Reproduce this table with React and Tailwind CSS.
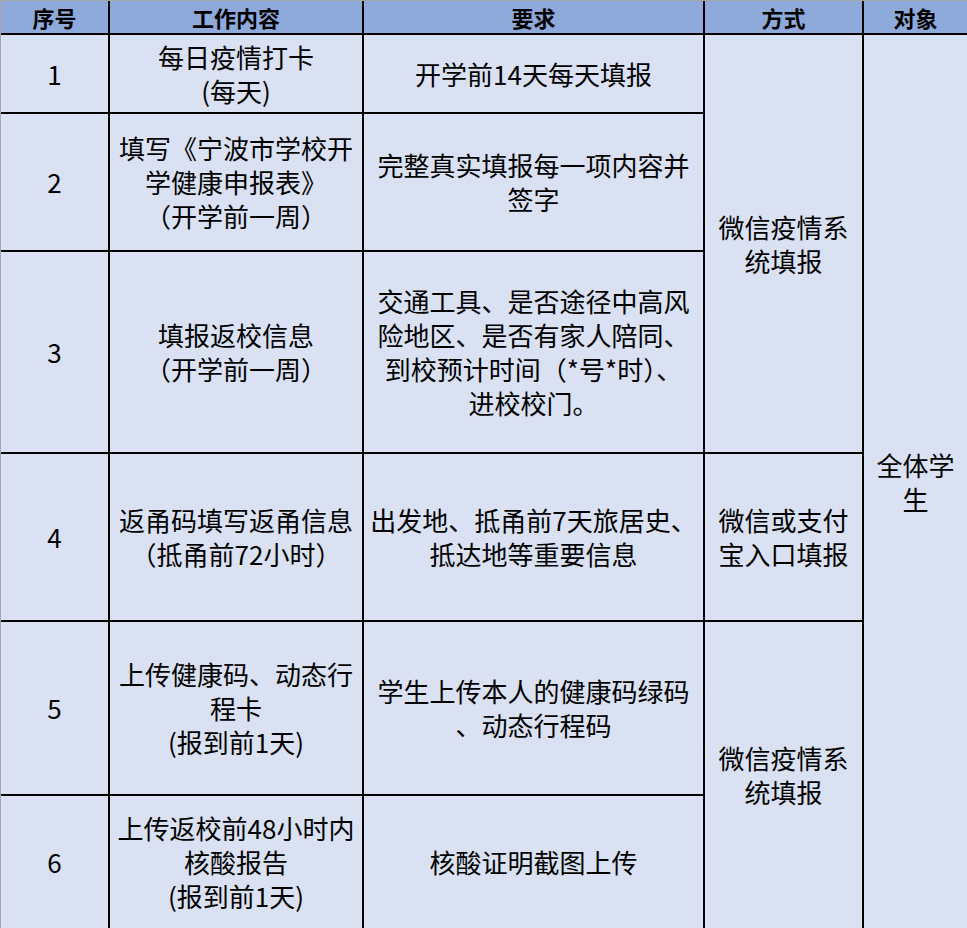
const Cell = ({ lines, className = "" }) => (
  <div
    className={
      "flex flex-col items-center justify-center bg-[#d9e1f2] text-center text-[26px] leading-[34px] text-black " +
      className
    }
  >
    {lines.map((l, i) => (
      <div key={i} className="whitespace-nowrap">
        {l}
      </div>
    ))}
  </div>
);

const Head = ({ children }) => (
  <div className="flex items-center justify-center bg-[#8eaadb] text-[22px] font-bold leading-none text-black">
    {children}
  </div>
);

const App = () => {
  return (
    <div
      className="h-[928px] w-[967px] overflow-hidden bg-white"
      style={{ fontFamily: '"Noto Sans CJK SC", "Noto Sans", sans-serif' }}
    >
      <div className="grid grid-cols-[107px_252px_339px_157px_103px] grid-rows-[32px_77px_136px_200px_166px_172px_132px] gap-[2px] border-l border-t border-[#a6a6a6] bg-black">
        <Head>序号</Head>
        <Head>工作内容</Head>
        <Head>要求</Head>
        <Head>方式</Head>
        <Head>对象</Head>

        {/* row 1 */}
        <Cell lines={["1"]} />
        <Cell lines={["每日疫情打卡", "(每天)"]} />
        <Cell lines={["开学前14天每天填报"]} />
        <Cell lines={["微信疫情系", "统填报"]} className="row-span-3" />
        <Cell lines={["全体学", "生"]} className="row-span-6" />

        {/* row 2 */}
        <Cell lines={["2"]} />
        <Cell lines={["填写《宁波市学校开", "学健康申报表》", "（开学前一周）"]} />
        <Cell lines={["完整真实填报每一项内容并", "签字"]} />

        {/* row 3 */}
        <Cell lines={["3"]} />
        <Cell lines={["填报返校信息", "（开学前一周）"]} />
        <Cell
          lines={[
            "交通工具、是否途径中高风",
            "险地区、是否有家人陪同、",
            "到校预计时间（*号*时）、",
            "进校校门。",
          ]}
        />

        {/* row 4 */}
        <Cell lines={["4"]} />
        <Cell lines={["返甬码填写返甬信息", "（抵甬前72小时）"]} />
        <Cell lines={["出发地、抵甬前7天旅居史、", "抵达地等重要信息"]} />
        <Cell lines={["微信或支付", "宝入口填报"]} />

        {/* row 5 */}
        <Cell lines={["5"]} />
        <Cell lines={["上传健康码、动态行", "程卡", "(报到前1天)"]} />
        <Cell lines={["学生上传本人的健康码绿码", "、动态行程码"]} />
        <Cell lines={["微信疫情系", "统填报"]} className="row-span-2" />

        {/* row 6 */}
        <Cell lines={["6"]} />
        <Cell lines={["上传返校前48小时内", "核酸报告", "(报到前1天)"]} />
        <Cell lines={["核酸证明截图上传"]} />
      </div>
    </div>
  );
};

export default App;
